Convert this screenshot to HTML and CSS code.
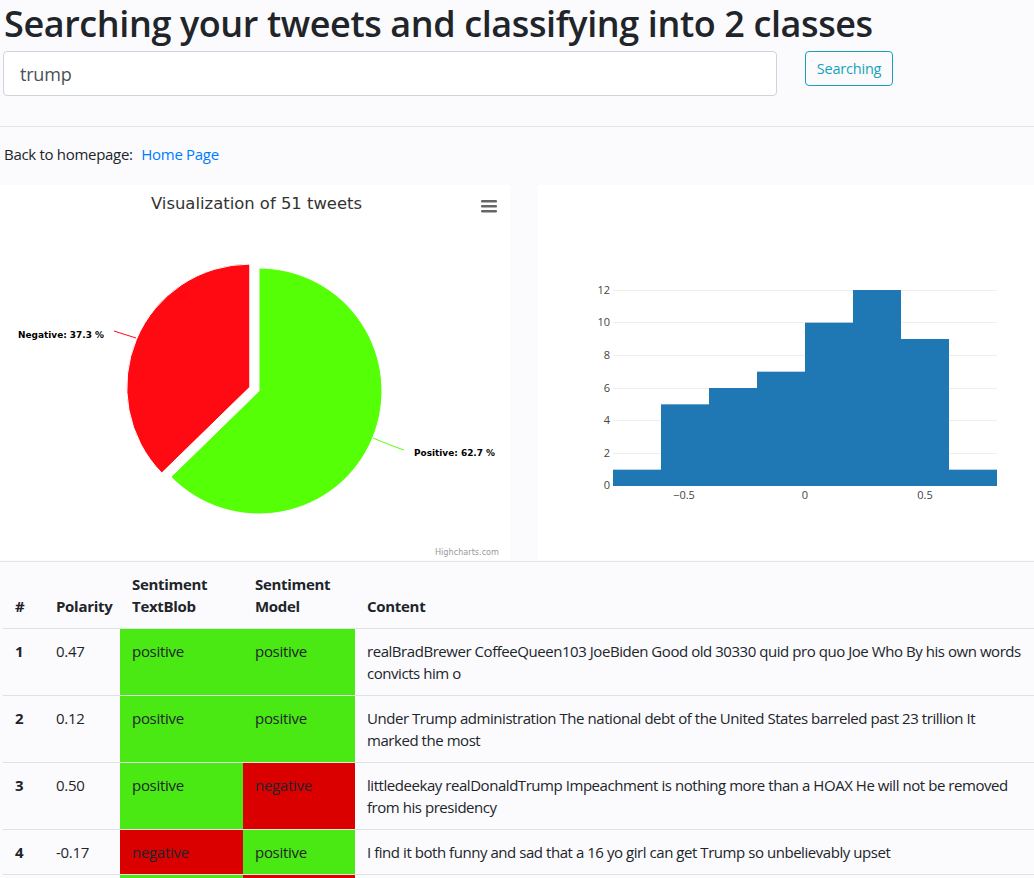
FILE: index.html
```html
<!DOCTYPE html>
<html>
<head>
<meta charset="utf-8">
<title>Tweets</title>
<link rel="stylesheet" href="styles.css">
</head>
<body>
<div class="page">
  <h1 class="title">Searching your tweets and classifying into 2 classes</h1>
  <form class="search">
    <input class="search-input" type="text" value="trump">
    <button class="search-btn" type="button">Searching</button>
  </form>
  <hr class="rule rule-top">
  <p class="back">Back to homepage: <a class="back-link" href="#">Home Page</a></p>
  <div class="charts">
    <div class="chart chart-pie">
      <svg width="510" height="375" viewBox="0 0 510 375">
        <text class="pie-title" x="151" y="24" textLength="211" lengthAdjust="spacingAndGlyphs">Visualization of 51 tweets</text>
        <g class="menu">
          <rect x="481" y="15" width="16" height="2.5" rx="1"/>
          <rect x="481" y="20" width="16" height="2.5" rx="1"/>
          <rect x="481" y="25" width="16" height="2.5" rx="1"/>
        </g>
        <path d="M259,206 L259,83 A123,123 0 1 1 170.94,291.88 Z" fill="#55ff05" stroke="#fff" stroke-width="1"/>
        <path d="M249.8,202.1 L161.74,287.98 A123,123 0 0 1 249.8,79.1 Z" fill="#ff0a12" stroke="#fff" stroke-width="1"/>
        <path d="M114,146 L136,153" stroke="#ff0a12" fill="none"/>
        <path d="M373,253 C385,258 395,262 404,265" stroke="#55ff05" fill="none"/>
        <text class="pie-label" x="18" y="153" textLength="86" lengthAdjust="spacingAndGlyphs">Negative: 37.3 %</text>
        <text class="pie-label" x="414" y="271" textLength="81" lengthAdjust="spacingAndGlyphs">Positive: 62.7 %</text>
        <text class="credits" x="435" y="370" textLength="64" lengthAdjust="spacingAndGlyphs">Highcharts.com</text>
      </svg>
    </div>
    <div class="chart chart-hist">
      <svg width="496" height="375" viewBox="0 0 496 375">
        <g class="grid">
          <line x1="75" x2="459" y1="268.5" y2="268.5"/>
          <line x1="75" x2="459" y1="235.5" y2="235.5"/>
          <line x1="75" x2="459" y1="203.5" y2="203.5"/>
          <line x1="75" x2="459" y1="170.5" y2="170.5"/>
          <line x1="75" x2="459" y1="137.5" y2="137.5"/>
          <line x1="75" x2="459" y1="105.5" y2="105.5"/>
        </g>
        <line x1="75" x2="123" y1="300.5" y2="300.5" stroke="#444"/>
        <g class="bars">
          <rect x="75" y="284.67" width="48" height="16.33"/>
          <rect x="123" y="219.33" width="48" height="81.67"/>
          <rect x="171" y="203" width="48" height="98"/>
          <rect x="219" y="186.67" width="48" height="114.33"/>
          <rect x="267" y="137.67" width="48" height="163.33"/>
          <rect x="315" y="105" width="48" height="196"/>
          <rect x="363" y="154" width="48" height="147"/>
          <rect x="411" y="284.67" width="48" height="16.33"/>
        </g>
        <g class="ylab">
          <text x="72" y="304">0</text>
          <text x="72" y="272">2</text>
          <text x="72" y="239">4</text>
          <text x="72" y="207">6</text>
          <text x="72" y="174">8</text>
          <text x="72" y="141">10</text>
          <text x="72" y="109">12</text>
        </g>
        <g class="xlab">
          <text x="146" y="314">−0.5</text>
          <text x="267" y="314">0</text>
          <text x="387" y="314">0.5</text>
        </g>
      </svg>
    </div>
  </div>
  <hr class="rule rule-mid">
  <table class="tweets">
    <colgroup>
      <col class="c-num"><col class="c-pol"><col class="c-tb"><col class="c-model"><col class="c-content">
    </colgroup>
    <thead>
      <tr>
        <th>#</th>
        <th>Polarity</th>
        <th>Sentiment TextBlob</th>
        <th>Sentiment Model</th>
        <th>Content</th>
      </tr>
    </thead>
    <tbody>
      <tr>
        <th>1</th><td>0.47</td>
        <td class="pos">positive</td><td class="pos">positive</td>
        <td class="content">realBradBrewer CoffeeQueen103 JoeBiden Good old 30330 quid pro quo Joe Who By his own words convicts him o</td>
      </tr>
      <tr>
        <th>2</th><td>0.12</td>
        <td class="pos">positive</td><td class="pos">positive</td>
        <td class="content">Under Trump administration The national debt of the United States barreled past 23 trillion It marked the most</td>
      </tr>
      <tr>
        <th>3</th><td>0.50</td>
        <td class="pos">positive</td><td class="neg">negative</td>
        <td class="content">littledeekay realDonaldTrump Impeachment is nothing more than a HOAX He will not be removed from his presidency</td>
      </tr>
      <tr>
        <th>4</th><td>-0.17</td>
        <td class="neg">negative</td><td class="pos">positive</td>
        <td class="content">I find it both funny and sad that a 16 yo girl can get Trump so unbelievably upset</td>
      </tr>
      <tr>
        <th>5</th><td>0.10</td>
        <td class="pos">positive</td><td class="neg">negative</td>
        <td class="content">Trump supporters share their thoughts on the impeachment inquiry</td>
      </tr>
    </tbody>
  </table>
</div>
</body>
</html>
```
FILE: styles.css
```css
html, body {
  margin: 0;
  padding: 0;
  background: #fbfbfe;
}
body {
  font-family: "Open Sans", "Noto Sans", "Liberation Sans", sans-serif;
  font-size: 15px;
  letter-spacing: -0.3px;
  line-height: 1.5;
  color: #212529;
}
.title {
  margin: 0 0 3px 4px;
  font-size: 36px;
  font-weight: 600;
  line-height: 48px;
  letter-spacing: -0.4px;
}
.search {
  display: flex;
  align-items: flex-start;
  gap: 28px;
  margin: 0 0 0 3px;
}
.search-input {
  box-sizing: border-box;
  width: 774px;
  height: 45px;
  padding: 0 16px;
  border: 1px solid #ced4da;
  border-radius: 4px;
  background: #fff;
  font-family: inherit;
  font-size: 18px;
  letter-spacing: -0.2px;
  color: #495057;
}
.search-btn {
  box-sizing: border-box;
  height: 35px;
  width: 88px;
  padding: 0;
  border: 1px solid #17a2b8;
  border-radius: 4px;
  background: transparent;
  color: #17a2b8;
  font-family: inherit;
  font-size: 14.5px;
  letter-spacing: -0.2px;
}
.rule {
  border: 0;
  border-top: 1px solid #e3e3e8;
  margin: 0;
}
.rule-top {
  margin-top: 30px;
}
.back {
  margin: 15px 0 0 4px;
  line-height: 24px;
}
.back-link {
  color: #007bff;
  text-decoration: none;
  margin-left: 5px;
}
.charts {
  display: flex;
  gap: 28px;
  margin-top: 19px;
}
.chart {
  background: #fff;
  height: 375px;
}
.chart svg {
  display: block;
}
.chart-pie {
  width: 510px;
}
.chart-hist {
  flex: 1;
}
.pie-title {
  font-family: "DejaVu Sans", sans-serif;
  font-size: 16px;
  letter-spacing: 0;
  fill: #333;
}
.menu rect {
  fill: #666;
}
.pie-label {
  font-family: "DejaVu Sans", sans-serif;
  font-size: 9px;
  font-weight: bold;
  letter-spacing: 0;
  fill: #000;
}
.credits {
  font-family: "DejaVu Sans", sans-serif;
  font-size: 9px;
  letter-spacing: 0;
  fill: #999;
}
.grid line {
  stroke: #eee;
  stroke-width: 1;
}
.bars rect {
  fill: #1f77b4;
}
.ylab text {
  font-family: "Open Sans", sans-serif;
  font-size: 11px;
  letter-spacing: 0;
  fill: #444;
  text-anchor: end;
}
.xlab text {
  font-family: "Open Sans", sans-serif;
  font-size: 11px;
  letter-spacing: 0;
  fill: #444;
  text-anchor: middle;
}
.rule-mid {
  margin-top: 1px;
}
.tweets {
  width: 1031px;
  margin-left: 3px;
  border-collapse: collapse;
  table-layout: fixed;
}
.c-num { width: 41px; }
.c-pol { width: 76px; }
.c-tb { width: 123px; }
.c-model { width: 112px; }
.tweets th, .tweets td {
  padding: 11px 12px;
  line-height: 22px;
  text-align: left;
  vertical-align: top;
  border-top: 1px solid #dee2e6;
}
.tweets thead th {
  vertical-align: bottom;
  border-top: 0;
  font-weight: bold;
}
.tweets .pos {
  background: #4ae914;
}
.tweets .neg {
  background: #db0000;
}
.tweets .content {
  padding-right: 9px;
  letter-spacing: -0.45px;
}
```
